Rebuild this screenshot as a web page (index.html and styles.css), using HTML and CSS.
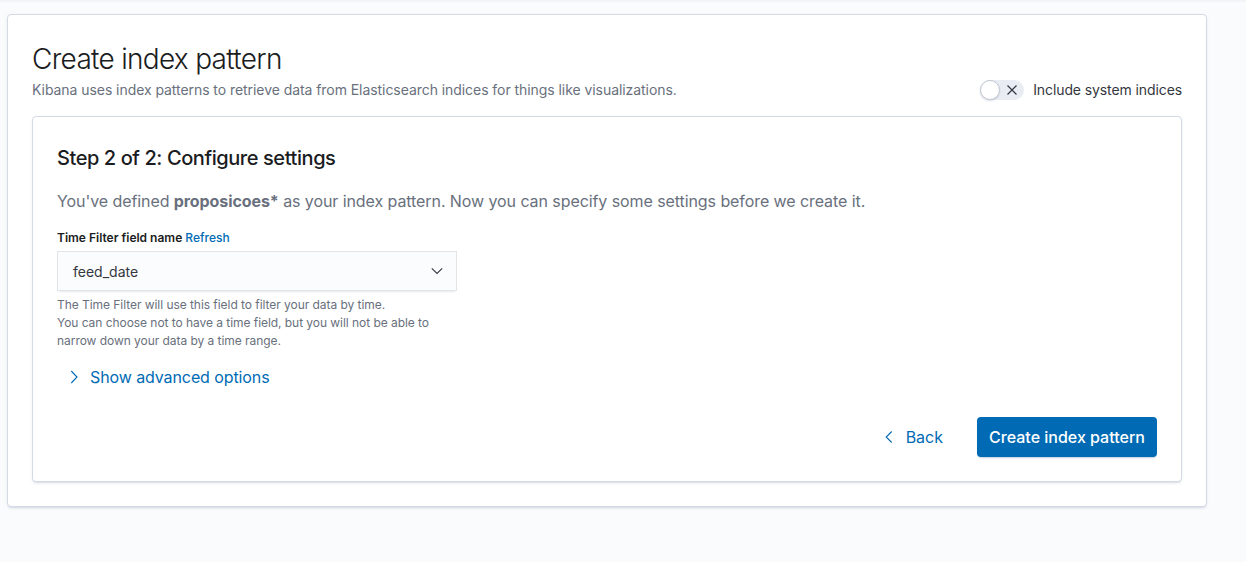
FILE: index.html
```html
<!DOCTYPE html>
<html lang="en">
<head>
<meta charset="utf-8">
<title>Create index pattern</title>
<link rel="stylesheet" href="styles.css">
</head>
<body>
<div class="topbar"></div>
<main class="page">
  <section class="panel outer">
    <header class="header">
      <div class="header-text">
        <h1 class="title">Create index pattern</h1>
        <p class="subtitle">Kibana uses index patterns to retrieve data from Elasticsearch indices for things like visualizations.</p>
      </div>
      <label class="switch">
        <span class="switch-track">
          <span class="switch-knob"></span>
          <svg class="switch-x" width="10" height="10" viewBox="0 0 10 10"><path d="M0.5 0.5L9.5 9.5M9.5 0.5L0.5 9.5" stroke="#343741" stroke-width="1.2" fill="none"/></svg>
        </span>
        <span class="switch-label">Include system indices</span>
      </label>
    </header>

    <div class="panel inner">
      <h2 class="step-title">Step 2 of 2: Configure settings</h2>
      <p class="lead">You've defined <strong>proposicoes*</strong> as your index pattern. Now you can specify some settings before we create it.</p>

      <div class="form-row">
        <div class="form-label">Time Filter field name <a class="link">Refresh</a></div>
        <div class="select">
          <span class="select-value">feed_date</span>
          <svg class="select-arrow" width="16" height="16" viewBox="0 0 16 16"><polyline points="2.8,5.3 8,10.5 13.2,5.3" fill="none" stroke="#343741" stroke-width="1.1"/></svg>
        </div>
        <div class="help">
          <div>The Time Filter will use this field to filter your data by time.</div>
          <div>You can choose not to have a time field, but you will not be able to narrow down your data by a time range.</div>
        </div>
      </div>

      <button class="empty-btn advanced">
        <svg width="16" height="16" viewBox="0 0 16 16"><polyline points="5.3,2 11,8 5.3,14" fill="none" stroke="#006bb4" stroke-width="1.1"/></svg>
        <span>Show advanced options</span>
      </button>

      <div class="actions">
        <button class="empty-btn back">
          <svg width="16" height="16" viewBox="0 0 16 16"><polyline points="10.7,2.5 5.2,8 10.7,13.5" fill="none" stroke="#006bb4" stroke-width="1.1"/></svg>
          <span>Back</span>
        </button>
        <button class="primary-btn">Create index pattern</button>
      </div>
    </div>
  </section>
</main>
</body>
</html>
```

FILE: styles.css
```css
* { box-sizing: border-box; }

html, body {
  margin: 0;
  padding: 0;
}

body {
  background: #fafbfd;
  font-family: Inter, "Noto Sans", "Liberation Sans", sans-serif;
  color: #343741;
  width: 1246px;
  height: 562px;
  overflow: hidden;
}

.topbar {
  height: 2px;
  background: #f2f4f7;
}

.page {
  padding: 12px 0 0 7px;
}

.panel {
  background: #fff;
  border: 1px solid #d3dae6;
  border-radius: 4px;
  box-shadow: 0 2px 2px -1px rgba(152, 162, 179, 0.3), 0 1px 5px -2px rgba(152, 162, 179, 0.3);
}

.outer {
  width: 1200px;
  padding: 24px;
}

.header {
  display: flex;
  justify-content: space-between;
  align-items: flex-end;
  margin-bottom: 16px;
}

.title {
  margin: 0;
  font-size: 28px;
  line-height: 40px;
  font-weight: 300;
  color: #1a1c21;
  letter-spacing: -0.7px;
}

.subtitle {
  margin: 0;
  font-size: 14px;
  line-height: 21px;
  color: #69707d;
  letter-spacing: -0.06px;
}

.switch {
  display: flex;
  align-items: center;
  gap: 9px;
  margin-bottom: 0;
}

.switch-track {
  position: relative;
  display: block;
  width: 44px;
  height: 20px;
  border-radius: 10px;
  background: #e9edf3;
}

.switch-knob {
  position: absolute;
  left: 0;
  top: 0;
  width: 20px;
  height: 20px;
  border-radius: 50%;
  background: #fff;
  border: 1px solid #c2c8d2;
  box-shadow: 0 1px 2px rgba(152, 162, 179, 0.4);
}

.switch-x {
  position: absolute;
  left: 27px;
  top: 5px;
}

.switch-label {
  font-size: 14px;
  line-height: 21px;
  color: #343741;
  letter-spacing: -0.1px;
}

.inner {
  padding: 24px;
}

.step-title {
  margin: 0;
  font-size: 20px;
  line-height: 34px;
  font-weight: 500;
  color: #1a1c21;
  letter-spacing: -0.42px;
}

.lead {
  margin: 14px 0 0;
  font-size: 16px;
  line-height: 24px;
  color: #69707d;
  letter-spacing: -0.08px;
}

.lead strong {
  font-weight: 700;
  color: #69707d;
}

.form-row {
  margin-top: 16px;
  width: 400px;
}

.form-label {
  font-size: 12px;
  line-height: 18px;
  font-weight: 600;
  color: #1a1c21;
}

.link {
  color: #006bb4;
  font-weight: 500;
  cursor: pointer;
}

.select {
  margin-top: 4px;
  height: 40px;
  display: flex;
  align-items: center;
  justify-content: space-between;
  padding: 0 12px 0 16px;
  background: #fbfcfd;
  border-radius: 0;
  box-shadow: 0 1px 1px -1px rgba(152, 162, 179, 0.2), 0 3px 2px -2px rgba(152, 162, 179, 0.2), inset 0 0 0 1px rgba(16, 22, 26, 0.1);
}

.select-value {
  font-size: 14px;
  color: #343741;
}

.select-arrow {
  display: block;
}

.help {
  margin-top: 5px;
  font-size: 12px;
  line-height: 18px;
  color: #69707d;
  letter-spacing: -0.05px;
}

.empty-btn {
  display: inline-flex;
  align-items: center;
  gap: 8px;
  height: 40px;
  border: none;
  background: transparent;
  color: #006bb4;
  font-family: inherit;
  font-size: 16px;
  line-height: 24px;
  cursor: pointer;
}

.empty-btn svg {
  display: block;
}

.advanced {
  margin-top: 7px;
  padding: 0 8px 0 9px;
  font-weight: 400;
  letter-spacing: -0.1px;
}

.actions {
  margin-top: 20px;
  display: flex;
  justify-content: flex-end;
  align-items: center;
  gap: 26px;
}

.back {
  padding: 0 8px;
  gap: 9px;
  font-weight: 400;
}

.primary-btn {
  height: 40px;
  width: 180px;
  border: none;
  border-radius: 4px;
  background: #006bb4;
  color: #fff;
  font-family: inherit;
  font-size: 16px;
  font-weight: 500;
  text-align: center;
  cursor: pointer;
  box-shadow: 0 2px 2px -1px rgba(39, 87, 131, 0.3);
}
```
